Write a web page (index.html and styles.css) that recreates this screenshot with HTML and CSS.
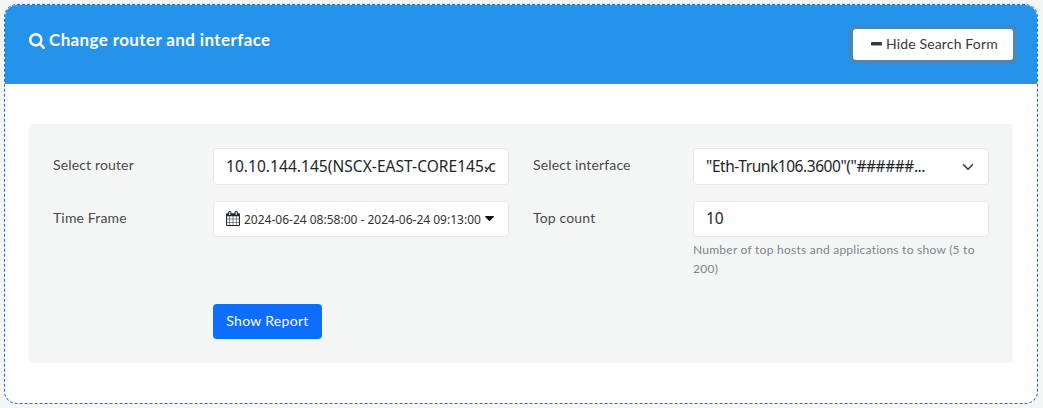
FILE: index.html
```html
<!DOCTYPE html>
<html lang="en">
<head>
<meta charset="utf-8">
<title>Change router and interface</title>
<link rel="stylesheet" href="styles.css">
</head>
<body>
<section class="card">
  <header class="card-header">
    <h1 class="title">
      <svg class="icon-search" viewBox="64 128 1664 1664"><path d="M1216 832q0-185-131.500-316.500t-316.500-131.500-316.500 131.500-131.500 316.500 131.500 316.500 316.500 131.500 316.500-131.500 131.500-316.500zm512 832q0 52-38 90t-90 38q-54 0-90-38l-343-342q-179 124-399 124-143 0-273.500-55.500t-225-150-150-225-55.500-273.500 55.500-273.500 150-225 225-150 273.500-55.500 273.500 55.500 225 150 150 225 55.500 273.500q0 220-124 399l343 343q37 37 37 90z"/></svg>
      <span class="title-text">Change router and interface</span>
    </h1>
    <button class="toggle" type="button"><svg class="icon-minus" viewBox="0 0 11 4"><rect width="11" height="3.400" rx=".7"/></svg><span class="toggle-text">Hide Search Form</span></button>
  </header>
  <div class="card-body">
    <form class="panel">
      <label class="label">Select router</label>
      <div class="control select-control"><span class="value v-router">10.10.144.145(NSCX-EAST-CORE145.c</span><svg class="chevron" viewBox="0 0 16 16"><path d="m4.500 8.500 2.500 2.500 2-2.500"/></svg></div>
      <label class="label second">Select interface</label>
      <div class="control select-control"><span class="value v-interface">"Eth-Trunk106.3600"("######...</span><svg class="chevron" viewBox="0 0 16 16"><path d="m2 5 6 6 6-6"/></svg></div>
      <label class="label">Time Frame</label>
      <div class="control range">
        <svg class="icon-calendar" viewBox="64 0 1664 1792"><path d="M192 1664h288v-288h-288v288zm352 0h320v-288h-320v288zm-352-352h288v-320h-288v320zm352 0h320v-320h-320v320zm-352-384h288v-288h-288v288zm736 736h320v-288h-320v288zm-384-736h320v-288h-320v288zm768 736h288v-288h-288v288zm-384-352h320v-320h-320v320zm-352-864v-288q0-13-9.500-22.500t-22.500-9.500h-64q-13 0-22.500 9.500t-9.500 22.500v288q0 13 9.500 22.500t22.500 9.500h64q13 0 22.500-9.500t9.500-22.500zm736 864h288v-320h-288v320zm-384-384h320v-288h-320v288zm384 0h288v-288h-288v288zm32-480v-288q0-13-9.500-22.500t-22.500-9.500h-64q-13 0-22.500 9.500t-9.500 22.500v288q0 13 9.500 22.500t22.500 9.500h64q13 0 22.500-9.500t9.500-22.500zm384-64v1280q0 52-38 90t-90 38h-1408q-52 0-90-38t-38-90v-1280q0-52 38-90t90-38h128v-96q0-66 47-113t113-47h64q66 0 113 47t47 113v96h384v-96q0-66 47-113t113-47h64q66 0 113 47t47 113v96h128q52 0 90 38t38 90z"/></svg>
        <span class="range-text">2024-06-24 08:58:00 - 2024-06-24 09:13:00</span>
        <svg class="icon-caret" viewBox="0 0 9 5"><path d="M.5 0h8q.7.300.2.900L5 4.700q-.5.400-1 0L.3.900Q-.2.300.5 0z"/></svg>
      </div>
      <label class="label second">Top count</label>
      <div class="field">
        <div class="control"><span class="value">10</span></div>
        <p class="hint">Number of top hosts and applications to show (5 to<br>200)</p>
      </div>
      <button class="submit" type="button">Show Report</button>
    </form>
  </div>
</section>
</body>
</html>
```
FILE: styles.css
```css
* { box-sizing: border-box; }
body {
  margin: 0;
  padding: 4px 5px 4px 4px;
  height: 408px;
  overflow: hidden;
  background: #f4f6f6;
  color: #4a4a4a;
  font: 14px/21px Lato, "Noto Sans", sans-serif;
}
svg { display: block; fill: currentColor; flex: none; }
button { font: inherit; border: 0; padding: 0; }
span { white-space: nowrap; }
.card {
  height: 400px;
  border: 1px dashed #0d6efd;
  border-radius: 13px;
  background: #fff;
  overflow: hidden;
}
.card-header {
  display: flex;
  justify-content: space-between;
  align-items: flex-start;
  height: 79px;
  padding: 24px;
  background: #2693eb;
}
.title {
  display: flex;
  align-items: center;
  gap: 4px;
  margin: 0;
  height: 23px;
  color: #fff;
  font-size: 17px;
  font-weight: 700;
  letter-spacing: .38px;
}
.title-text { padding-bottom: 2px; }
.icon-search { width: 16px; height: 16px; }
.toggle {
  display: flex;
  align-items: center;
  width: 160px;
  height: 31px;
  padding-left: 19px;
  border-radius: 3px;
  background: #fff;
  color: #3a3a3a;
  box-shadow: 0 0 0 4px #4a86b8;
  letter-spacing: .15px;
}
.toggle-text { padding-bottom: 2px; }
.icon-minus { width: 11px; height: 4px; margin: -2px 4px 0 -1px; }
.card-body { padding: 40px 24px; }
.panel {
  display: grid;
  grid-template-columns: 160px 296px 184px 296px;
  grid-template-rows: 37px 87px 35px;
  row-gap: 16px;
  height: 239px;
  padding: 24px;
  border-radius: 4px;
  background: #f4f6f6;
}
.label { padding-top: 6px; letter-spacing: .15px; }
.second { padding-left: 24px; }
.control {
  display: flex;
  align-items: center;
  height: 36px;
  padding: 0 12px;
  border: 1px solid #e9e6e3;
  border-radius: 4px;
  background: #fff;
  color: #212529;
  font-family: "Noto Sans", sans-serif;
  font-size: 15.500px;
}
.value { padding-bottom: 1px; }
.v-router { letter-spacing: .05px; }
.v-interface { letter-spacing: -.44px; }
.select-control { height: 37px; position: relative; }
.chevron {
  position: absolute;
  right: 14px;
  top: 12px;
  width: 12px;
  height: 12px;
  fill: none;
  stroke: #343a40;
  stroke-width: 2;
  stroke-linecap: round;
  stroke-linejoin: round;
}
.range { gap: 4px; font-size: 12px; color: #333; }
.icon-calendar { width: 14px; height: 15px; margin-top: -2px; color: #212529; }
.icon-caret { width: 9px; height: 5px; margin-top: -2px; color: #111; }
.hint { margin: 4px 0 0; color: #7d858c; font-size: 12px; line-height: 18.500px; letter-spacing: .25px; }
.submit {
  grid-column: 2;
  width: 109px;
  height: 35px;
  padding-bottom: 2px;
  border-radius: 4px;
  background: #0d6efd;
  color: #fff;
  letter-spacing: .3px;
}
```
